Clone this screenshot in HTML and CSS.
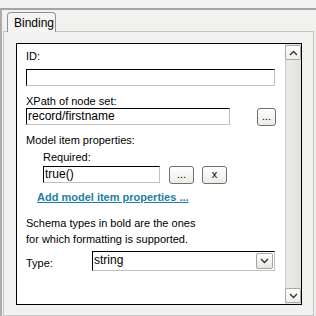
FILE: index.html
```html
<!DOCTYPE html>
<html lang="en">

<head>
    <meta charset="UTF-8">
    <title>Binding</title>
    <link rel="stylesheet" href="styles.css">
</head>

<body>
    <div class="window">
        <div class="tabs">
            <div class="tab-gap"></div>
            <div class="tab">Binding</div>
            <div class="tab-fill"></div>
        </div>
        <div class="panel">
            <div class="box">
                <div class="content">
                    <div class="label">ID:</div>
                    <div class="input id-input"></div>

                    <div class="label xpath-label">XPath of node set:</div>
                    <div class="row">
                        <div class="input xpath-input">record/firstname</div>
                        <div class="btn xpath-btn">...</div>
                    </div>

                    <div class="label model-label">Model item properties:</div>
                    <div class="label required-label">Required:</div>
                    <div class="row required-row">
                        <div class="input required-input">true()</div>
                        <div class="btn small-btn">...</div>
                        <div class="btn small-btn">x</div>
                    </div>

                    <a class="add-link" href="#">Add model item properties ...</a>

                    <p class="note">Schema types in bold are the ones<br>for which formatting is supported.</p>

                    <div class="row type-row">
                        <div class="type-label">Type:</div>
                        <div class="input select">
                            <span>string</span>
                            <div class="drop">
                                <svg width="9" height="6" viewBox="0 0 9 6"><path d="M1 1 L4.5 4.5 L8 1" fill="none" stroke="#333" stroke-width="1.4"/></svg>
                            </div>
                        </div>
                    </div>
                </div>
                <div class="scrollbar">
                    <div class="sb-btn">
                        <svg width="9" height="6" viewBox="0 0 9 6"><path d="M1 5 L4.5 1.5 L8 5" fill="none" stroke="#333" stroke-width="1.4"/></svg>
                    </div>
                    <div class="sb-track"></div>
                    <div class="sb-btn">
                        <svg width="9" height="6" viewBox="0 0 9 6"><path d="M1 1 L4.5 4.5 L8 1" fill="none" stroke="#333" stroke-width="1.4"/></svg>
                    </div>
                </div>
            </div>
        </div>
    </div>
</body>

</html>
```

FILE: styles.css
```css
body {
    margin: 0;
    padding: 0;
    width: 316px;
    height: 316px;
    overflow: hidden;
    background-color: #f1f1ef;
    font-family: "Liberation Sans", Arial, sans-serif;
    font-size: 11px;
    color: #000;
}

.window {
    margin-top: 8px;
    height: 306px;
    border-top: 2px solid #a4a4a4;
    border-left: 2px solid #acacac;
}

.tabs {
    display: flex;
    height: 22px;
}

.tab-gap {
    width: 4px;
    margin-left: 1px;
    border-bottom: 1px solid #c4c4c4;
}

.tab {
    margin-top: 2px;
    width: 49px;
    height: 20px;
    box-sizing: border-box;
    padding: 3px 0 0 6px;
    border: 1px solid #919191;
    border-bottom: none;
    border-radius: 4px 4px 0 0;
    background-color: #f4f4f2;
    font-size: 12px;
}

.tab-fill {
    flex: 1;
    margin-right: 2px;
    border-bottom: 1px solid #c4c4c4;
}

.panel {
    margin-left: 1px;
    width: 311px;
    height: 284px;
    box-sizing: border-box;
    border: 1px solid #c4c4c4;
    border-top: none;
    padding: 11px 0 0 12px;
}

.box {
    display: flex;
    width: 286px;
    height: 262px;
    box-sizing: border-box;
    border: 1px solid #000;
    background-color: #fff;
}

.content {
    flex: 1;
    padding: 6px 0 0 9px;
}

.label {
    line-height: 13px;
}

.input {
    box-sizing: border-box;
    height: 17px;
    border: 1px solid;
    border-color: #000 #c0c0c0 #c0c0c0 #000;
    background-color: #fff;
    padding-left: 1px;
    line-height: 15px;
    font-size: 12px;
}

.id-input {
    margin-top: 6px;
    width: 249px;
}

.xpath-label {
    margin-top: 9px;
}

.row {
    display: flex;
    align-items: flex-start;
}

.xpath-input {
    width: 204px;
}

.btn {
    box-sizing: border-box;
    height: 18px;
    border: 1px solid #6f6f6f;
    border-radius: 3px;
    background: linear-gradient(#ffffff, #ecebe6);
    text-align: center;
    line-height: 14px;
    font-size: 11px;
}

.xpath-btn {
    width: 19px;
    margin-left: 27px;
}

.model-label {
    margin-top: 8px;
}

.required-label {
    margin-top: 4px;
    padding-left: 17px;
}

.required-row {
    margin-top: 2px;
    padding-left: 17px;
}

.required-input {
    width: 117px;
}

.small-btn {
    width: 25px;
    margin-left: 9px;
}

.small-btn + .small-btn {
    margin-left: 8px;
}

.add-link {
    display: block;
    margin-top: 7px;
    padding-left: 11px;
    line-height: 13px;
    font-weight: bold;
    font-size: 11px;
    color: #1b7ea6;
}

.note {
    margin: 11px 0 0 0;
    line-height: 16px;
}

.type-row {
    margin-top: 4px;
    align-items: flex-end;
}

.type-label {
    width: 66px;
    line-height: 13px;
    padding-bottom: 1px;
}

.select {
    display: flex;
    justify-content: space-between;
    width: 183px;
    height: 20px;
    line-height: 17px;
}

.drop {
    display: flex;
    align-items: center;
    justify-content: center;
    box-sizing: border-box;
    width: 17px;
    height: 16px;
    margin: 1px 1px 0 0;
    border: 1px solid #a4a4a4;
    border-radius: 2px;
    background: linear-gradient(#ffffff, #e6e5e0);
}

.scrollbar {
    display: flex;
    flex-direction: column;
    width: 16px;
    background: linear-gradient(to right, #c8c8c4, #ecebe7 2px, #e2e1dc);
}

.sb-btn {
    display: flex;
    align-items: center;
    justify-content: center;
    box-sizing: border-box;
    height: 15px;
    margin: 1px 0;
    border: 1px solid #a8a8a8;
    border-radius: 2px;
    background: linear-gradient(#ffffff, #eeeeea);
}

.sb-track {
    flex: 1;
}
```
